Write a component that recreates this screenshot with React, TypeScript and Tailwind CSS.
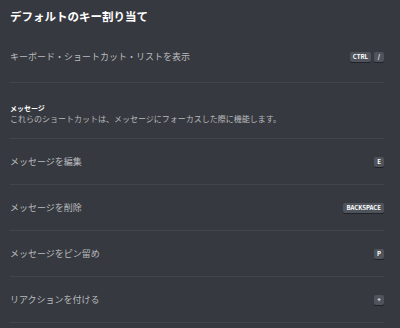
const Key = ({ label }: { label: string }) => (
  <span className="inline-flex h-[10px] min-w-[10px] items-center justify-center rounded-[2px] bg-[#4f545c] px-[3px] text-[6px] font-bold leading-none text-white shadow-[0_1px_0_#202225]">
    {label}
  </span>
);

const Row = ({ label, keys }: { label: string; keys: string[] }) => (
  <div className="flex h-[46px] items-center justify-between border-b border-[#42454b]">
    <span className="text-[9px] text-[#b9bbbe]">{label}</span>
    <div className="flex gap-[3px]">
      {keys.map((k) => (
        <Key key={k} label={k} />
      ))}
    </div>
  </div>
);

export default function App() {
  return (
    <div
      className="h-[328px] w-[400px] overflow-hidden bg-[#36393f] pl-[10px] pr-[16px]"
      style={{ fontFamily: '"Noto Sans CJK JP", "Noto Sans", sans-serif' }}
    >
      <div className="h-[34px] pt-[8px]">
        <h1 className="text-[11.5px] font-bold leading-[16px] text-white">デフォルトのキー割り当て</h1>
      </div>

      <div className="flex h-[49px] items-center justify-between border-b border-[#42454b] pb-[3px]">
        <span className="text-[9px] text-[#b9bbbe]">キーボード・ショートカット・リストを表示</span>
        <div className="flex gap-[3px]">
          <Key label="CTRL" />
          <Key label="/" />
        </div>
      </div>

      <div className="h-[56px] border-b border-[#42454b] pt-[20px]">
        <div className="text-[7px] font-bold leading-[10px] text-white">メッセージ</div>
        <div className="text-[8px] leading-[12px] text-[#b9bbbe]">
          これらのショートカットは、メッセージにフォーカスした際に機能します。
        </div>
      </div>

      <Row label="メッセージを編集" keys={['E']} />
      <Row label="メッセージを削除" keys={['BACKSPACE']} />
      <Row label="メッセージをピン留め" keys={['P']} />
      <Row label="リアクションを付ける" keys={['+']} />
    </div>
  );
}
